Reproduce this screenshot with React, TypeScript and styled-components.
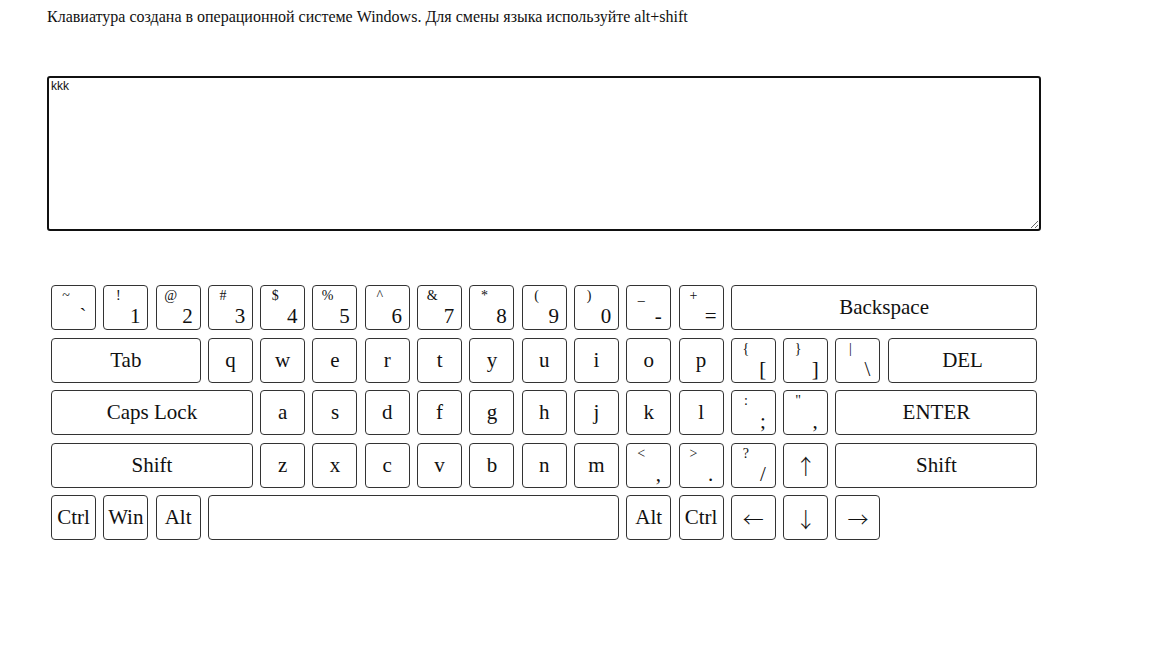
import React from "react";
import styled, {createGlobalStyle} from "styled-components";

const GlobalStyle = createGlobalStyle`
    html, body {
        margin: 0;
        padding: 0;
        background: #ffffff;
    }
`

type KeyDef = {
    label?: string;
    top?: string;
    bottom?: string;
    span?: number;
    arrow?: boolean;
};

const rows: KeyDef[][] = [
    [
        {top: '~', bottom: '`'}, {top: '!', bottom: '1'}, {top: '@', bottom: '2'}, {top: '#', bottom: '3'},
        {top: '$', bottom: '4'}, {top: '%', bottom: '5'}, {top: '^', bottom: '6'}, {top: '&', bottom: '7'},
        {top: '*', bottom: '8'}, {top: '(', bottom: '9'}, {top: ')', bottom: '0'}, {top: '_', bottom: '-'},
        {top: '+', bottom: '='}, {label: 'Backspace', span: 6},
    ],
    [
        {label: 'Tab', span: 3}, {label: 'q'}, {label: 'w'}, {label: 'e'}, {label: 'r'}, {label: 't'},
        {label: 'y'}, {label: 'u'}, {label: 'i'}, {label: 'o'}, {label: 'p'},
        {top: '{', bottom: '['}, {top: '}', bottom: ']'}, {top: '|', bottom: '\\'}, {label: 'DEL', span: 3},
    ],
    [
        {label: 'Caps Lock', span: 4}, {label: 'a'}, {label: 's'}, {label: 'd'}, {label: 'f'}, {label: 'g'},
        {label: 'h'}, {label: 'j'}, {label: 'k'}, {label: 'l'},
        {top: ':', bottom: ';'}, {top: '"', bottom: ','}, {label: 'ENTER', span: 4},
    ],
    [
        {label: 'Shift', span: 4}, {label: 'z'}, {label: 'x'}, {label: 'c'}, {label: 'v'}, {label: 'b'},
        {label: 'n'}, {label: 'm'}, {top: '<', bottom: ','}, {top: '>', bottom: '.'}, {top: '?', bottom: '/'},
        {label: '↑', arrow: true}, {label: 'Shift', span: 4},
    ],
    [
        {label: 'Ctrl'}, {label: 'Win'}, {label: 'Alt'}, {label: '', span: 8}, {label: 'Alt'}, {label: 'Ctrl'},
        {label: '←', arrow: true}, {label: '↓', arrow: true}, {label: '→', arrow: true},
    ],
]

export default function App() {
    return (
        <Page>
            <GlobalStyle/>
            <Hint>Клавиатура создана в операционной системе Windows. Для смены языка используйте alt+shift</Hint>
            <Output defaultValue={'kkk'}/>
            <Keyboard>
                {rows.map((row, r) =>
                    row.map((k, i) => (
                        <Key key={`${r}-${i}`} $span={k.span ?? 1} $dual={!!k.top}>
                            {k.top ? (
                                <>
                                    <TopSign>{k.top}</TopSign>
                                    <BottomSign>{k.bottom}</BottomSign>
                                </>
                            ) : k.arrow ? <Arrow>{k.label}</Arrow> : k.label}
                        </Key>
                    ))
                )}
            </Keyboard>
        </Page>
    );
}

const Page = styled.div`
    padding: 8px 0 0 47px;
    font-family: "Liberation Serif", "Times New Roman", serif;
    color: #111;
`

const Hint = styled.p`
    margin: 0;
    font-size: 16px;
    line-height: 18px;
`

const Output = styled.textarea`
    display: block;
    box-sizing: border-box;
    width: 994px;
    height: 155px;
    margin-top: 50px;
    padding: 1px 2px;
    border: 2px solid #111;
    border-radius: 3px;
    font-family: "Liberation Sans", Arial, sans-serif;
    font-size: 12px;
    color: #111;
    outline: none;
`

const Keyboard = styled.div`
    display: grid;
    grid-template-columns: repeat(19, 45px);
    grid-auto-rows: 45px;
    column-gap: 7.3px;
    row-gap: 7.5px;
    margin: 54px 0 0 4px;
`

const Key = styled.div<{ $span: number; $dual: boolean }>`
    grid-column: span ${p => p.$span};
    box-sizing: border-box;
    border: 1px solid #333;
    border-radius: 4px;
    background: #fff;
    font-size: 21px;
    display: flex;
    flex-direction: ${p => p.$dual ? 'column' : 'row'};
    justify-content: ${p => p.$dual ? 'space-between' : 'center'};
    align-items: ${p => p.$dual ? 'flex-start' : 'center'};
    padding: ${p => p.$dual ? '2px 0 2px' : '0'};
    white-space: nowrap;
`

const TopSign = styled.span`
    width: 28px;
    text-align: center;
    font-size: 14px;
    line-height: 15px;
`

const BottomSign = styled.span`
    width: 28px;
    margin-left: 17px;
    text-align: center;
    font-size: 21px;
    line-height: 22px;
`

const Arrow = styled.span`
    font-family: "Noto Sans CJK JP", "DejaVu Serif", serif;
    font-weight: 300;
    font-size: 21px;
    color: #111;
`
